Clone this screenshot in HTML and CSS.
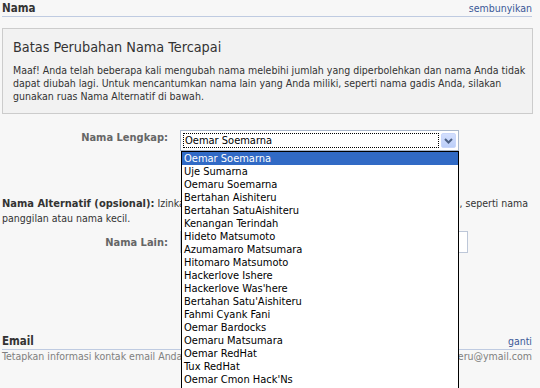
FILE: index.html
```html
<!DOCTYPE html>
<html lang="id">
<head>
<meta charset="utf-8">
<title>Nama</title>
<link rel="stylesheet" href="styles.css">
</head>
<body>
<div class="page">
  <div class="sec-head">
    <h2>Nama</h2>
    <a href="#">sembunyikan</a>
  </div>
  <div class="notice">
    <h3>Batas Perubahan Nama Tercapai</h3>
    <p>Maaf! Anda telah beberapa kali mengubah nama melebihi jumlah yang diperbolehkan dan nama Anda tidak<br>dapat diubah lagi. Untuk mencantumkan nama lain yang Anda miliki, seperti nama gadis Anda, silakan<br>gunakan ruas Nama Alternatif di bawah.</p>
  </div>
  <div class="field field-name">
    <label>Nama Lengkap:</label>
    <div class="select">
      <div class="sel-val">Oemar Soemarna</div>
      <div class="sel-btn"><svg width="9" height="6" viewBox="0 0 9 6"><path d="M1 1l3.5 3.5L8 1" fill="none" stroke="#4d6185" stroke-width="2"/></svg></div>
      <ul class="sel-list">
        <li class="on">Oemar Soemarna</li>
        <li>Uje Sumarna</li>
        <li>Oemaru Soemarna</li>
        <li>Bertahan Aishiteru</li>
        <li>Bertahan SatuAishiteru</li>
        <li>Kenangan Terindah</li>
        <li>Hideto Matsumoto</li>
        <li>Azumamaro Matsumara</li>
        <li>Hitomaro Matsumoto</li>
        <li>Hackerlove Ishere</li>
        <li>Hackerlove Was'here</li>
        <li>Bertahan Satu'Aishiteru</li>
        <li>Fahmi Cyank Fani</li>
        <li>Oemar Bardocks</li>
        <li>Oemaru Matsumara</li>
        <li>Oemar RedHat</li>
        <li>Tux RedHat</li>
        <li>Oemar Cmon Hack'Ns</li>
        <li>Oemar Aishiteru</li>
      </ul>
    </div>
  </div>
  <div class="alt">
    <p class="alt-l1"><span><b>Nama Alternatif (opsional):</b> Izinkan teman mencari Anda</span><span>dengan nama lain yang Anda tahu, seperti nama</span></p>
    <p class="alt-l2">panggilan atau nama kecil.</p>
  </div>
  <div class="field field-other">
    <label>Nama Lain:</label>
    <input class="text-input" type="text">
  </div>
  <div class="sec-head email-head">
    <h2>Email</h2>
    <a href="#">ganti</a>
  </div>
  <p class="email-desc"><span>Tetapkan informasi kontak email Anda.</span><span>Email: bertahan_aishiteru@ymail.com</span></p>
</div>
</body>
</html>
```
FILE: styles.css
```css
html, body {
  min-height: 388px;
}
body {
  margin: 0;
  background: #f7f7f7;
  font-family: "DejaVu Sans Condensed", "DejaVu Sans", sans-serif;
  font-stretch: condensed;
  font-size: 10.5px;
  color: #333;
}
.page {
  width: 530px;
  padding-left: 2px;
}
.sec-head {
  display: flex;
  justify-content: space-between;
  align-items: baseline;
  height: 16px;
  line-height: 16px;
  border-bottom: 1px solid #bfcbe1;
}
.sec-head h2 {
  margin: 0;
  font-size: 11.5px;
  font-weight: bold;
  color: #333;
}
.sec-head a {
  color: #3b5998;
  text-decoration: none;
  font-size: 10.5px;
}
.notice {
  margin: 11px -1px 0 0;
  border: 1px solid #ccc;
  background: #f2f2f2;
  padding: 10px;
}
.notice h3 {
  margin: 0;
  font-size: 14.3px;
  font-weight: normal;
  line-height: 17px;
  color: #333;
}
.notice p {
  margin: 8px 0 0;
  line-height: 13px;
  white-space: nowrap;
}
.field {
  display: flex;
  align-items: flex-start;
}
.field label {
  width: 166px;
  flex: none;
  text-align: right;
  font-size: 11px;
  font-weight: bold;
  color: #666;
  line-height: 13px;
  margin-right: 12px;
}
.field-name {
  margin-top: 16px;
}
.field-name label {
  padding-top: 1px;
}
.select {
  position: relative;
  width: 279px;
  height: 21px;
  box-sizing: border-box;
  border: 1px solid #a9b7cb;
  background: #fff;
  padding: 2px;
  display: flex;
  gap: 2px;
  font-size: 11px;
}
.sel-val {
  flex: 1;
  box-sizing: border-box;
  border: 1px dotted #000;
  line-height: 13px;
  padding-left: 1px;
  color: #000;
}
.sel-btn {
  width: 15px;
  height: 15px;
  box-sizing: border-box;
  background: linear-gradient(#d3dffd, #bccff9);
  border: 1px solid #c9d7fb;
  border-radius: 2px;
  display: flex;
  align-items: center;
  justify-content: center;
}
.sel-list {
  position: absolute;
  top: 20px;
  left: 0;
  width: 278px;
  height: 237px;
  overflow: hidden;
  box-sizing: border-box;
  margin: 0;
  padding: 0;
  list-style: none;
  border: 1px solid #000;
  border-bottom: none;
  background: #fff;
}
.sel-list li {
  line-height: 13px;
  padding-left: 2px;
  color: #000;
  white-space: nowrap;
}
.sel-list li.on {
  background: #316ac5;
  color: #fff;
}
.alt {
  margin: 45px 4px 0 0;
  line-height: 14px;
}
.alt p {
  margin: 0;
}
.alt b {
  font-size: 11px;
}
.alt-l1 {
  display: flex;
  justify-content: space-between;
  white-space: nowrap;
}
.field-other {
  margin-top: 6px;
}
.field-other label {
  padding-top: 5px;
}
.text-input {
  width: 288px;
  height: 22px;
  box-sizing: border-box;
  border: 1px solid #bdc7d8;
  background: #fff;
  margin: 0;
  padding: 0;
}
.email-head {
  margin-top: 80px;
}
.email-desc {
  margin: 0;
  display: flex;
  justify-content: space-between;
  color: #808080;
  line-height: 12px;
}
```
